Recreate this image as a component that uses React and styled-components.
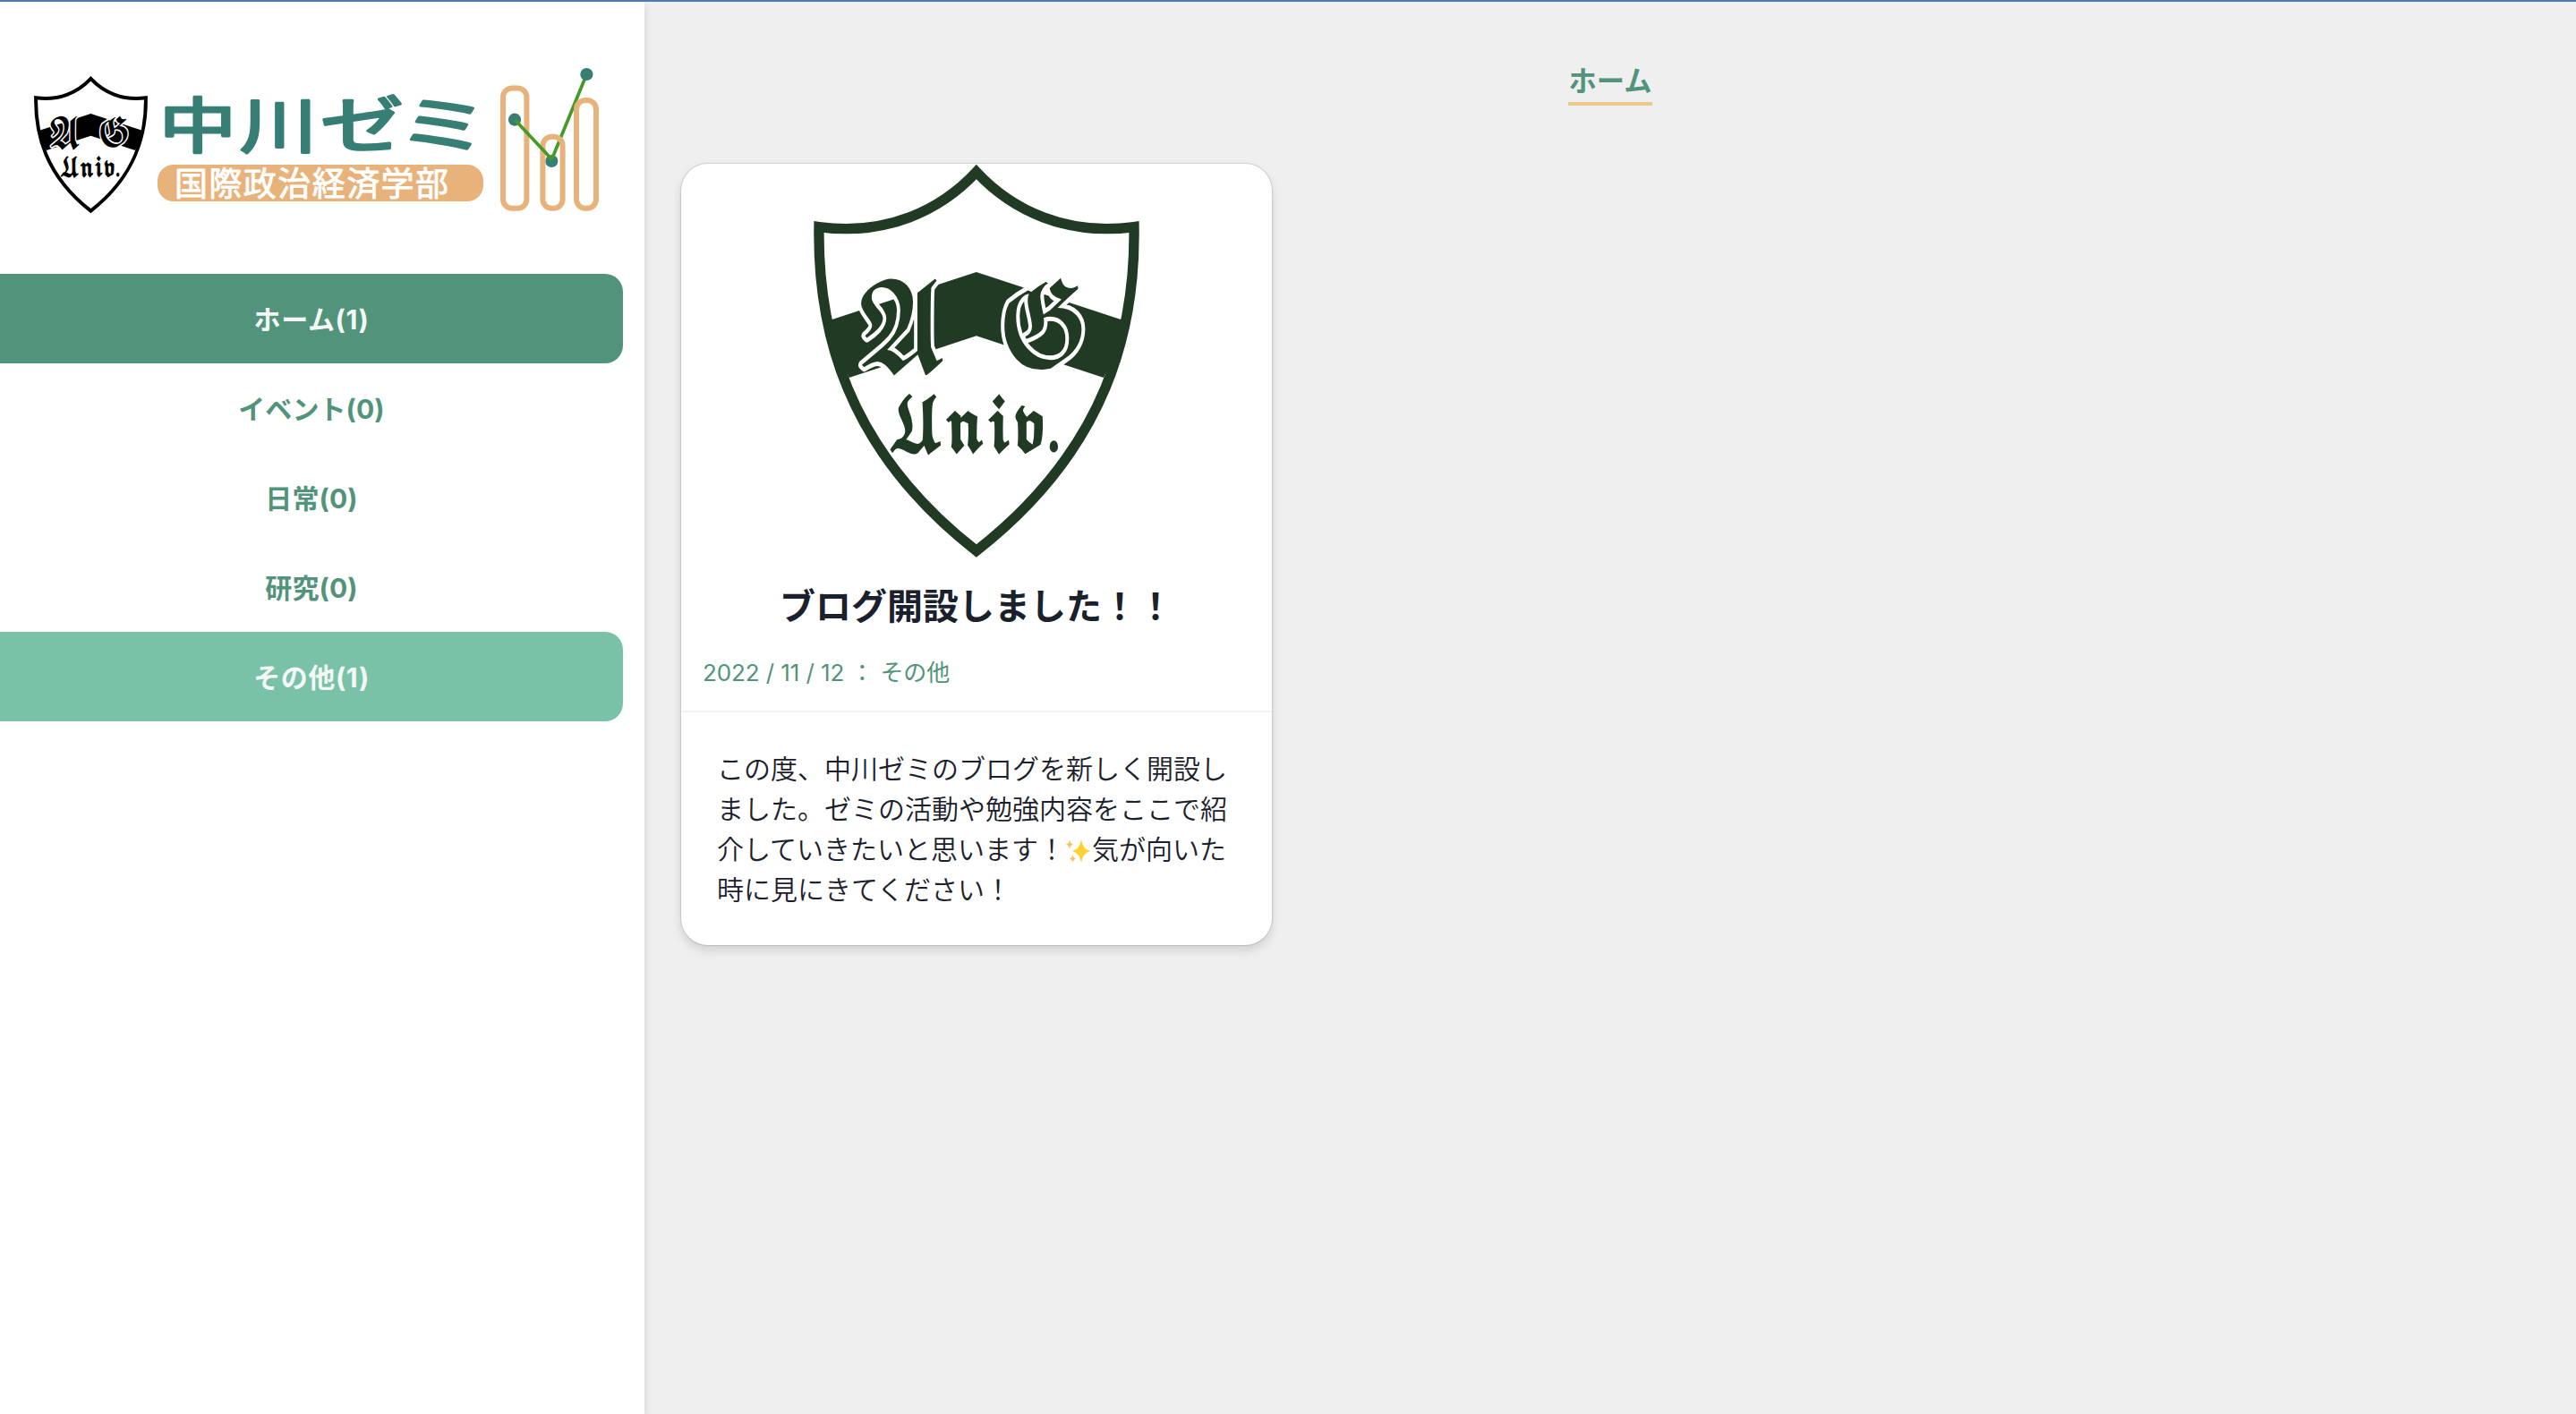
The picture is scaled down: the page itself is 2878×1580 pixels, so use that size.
import React from "react";
import styled, { createGlobalStyle } from "styled-components";

const GlobalStyle = createGlobalStyle`
  * { box-sizing: border-box; }
  body {
    margin: 0;
    background: #efefef;
    color: #1a202c;
    font-family: Inter, "Noto Sans CJK JP", sans-serif;
    font-size: 30px;
    line-height: 1.5;
  }
`;

const Page = styled.div`
  display: flex;
  height: 1580px;
  border-top: 2px solid #5279ae;
  overflow: hidden;
`;

const Sidebar = styled.aside`
  flex: 0 0 720px;
  background: #fff;
  box-shadow: 0 8px 12px rgba(0, 0, 0, 0.08), 0 0 10px rgba(0, 0, 0, 0.05);
`;

const LogoLink = styled.div`
  height: 304px;
  svg { display: block; }
`;

const Menu = styled.nav`
  display: flex;
  flex-direction: column;
  width: 696px;
`;

const MenuItem = styled.a`
  display: flex;
  align-items: center;
  justify-content: center;
  height: 100px;
  padding-top: 2px;
  border-radius: 0 20px 20px 0;
  font-weight: 700;
  letter-spacing: ${(p) => (p.$bg ? "0.6px" : "0.1px")};
  color: ${(p) => (p.$bg ? "#f3f7f5" : "#52937b")};
  background: ${(p) => p.$bg || "transparent"};
`;

const Main = styled.main`
  flex: 1;
  display: flex;
  flex-direction: column;
`;

const Tabs = styled.div`
  display: flex;
  justify-content: center;
  height: 181px;
  padding-top: 64px;
`;

const Tab = styled.a`
  height: 52px;
  border-bottom: 4px solid #ebc88c;
  color: #52937b;
  font-size: 31.4px;
  line-height: 50px;
  font-weight: 700;
`;

const Posts = styled.div`
  display: flex;
  padding-left: 41px;
`;

const Card = styled.article`
  width: 660px;
  border-radius: 30px;
  background: #fff;
  box-shadow: 0 0 1px 1px rgba(0, 0, 0, 0.12), 0 6px 12px rgba(0, 0, 0, 0.13);
  overflow: hidden;
`;

const CardImage = styled.div`
  display: flex;
  justify-content: center;
  height: 442px;
`;

const Title = styled.h2`
  margin: 0;
  padding-top: 23px;
  height: 100px;
  font-size: 40px;
  line-height: 60px;
  font-weight: 700;
  text-align: center;
`;

const Meta = styled.div`
  display: flex;
  height: 71px;
  padding: 7px 24px 0;
  color: #52937b;
  font-size: 26px;
  line-height: 39px;
  letter-spacing: -0.1px;
  white-space: pre;
  border-bottom: 2px solid #edf2f7;
`;

const Body = styled.p`
  margin: 0;
  padding: 41px 40px 39px;
  font-weight: 350;
`;

const Sparkle = styled.svg`
  display: inline-block;
  width: 30px;
  height: 30px;
  vertical-align: -5px;
`;

const blackletter = `"DejaVu Math TeX Gyre", "DejaVu Serif", "Liberation Serif", serif`;

function Crest({ color, ...rest }) {
  const letter = {
    fontFamily: blackletter,
    fill: color,
    stroke: "#fff",
    strokeWidth: 30,
    strokeLinejoin: "round",
    paintOrder: "stroke",
  };
  return (
    <svg viewBox="87 42 1091 1317" {...rest}>
      <path
        fill="#fff"
        stroke={color}
        strokeWidth="34"
        strokeMiterlimit="8"
        d="M632 67 C512 196 330 282 105 251 C100 590 190 990 632 1336 C1074 990 1165 590 1160 251 C934 282 752 196 632 67Z"
      />
      <path
        fill={color}
        d="M140 564 L632 402 L1125 564 Q1098 680 1058 756 L632 616 L206 756 Q164 674 140 564Z"
      />
      <text {...letter} x="222" y="736" fontSize="400" textLength="322" lengthAdjust="spacingAndGlyphs">𝕬</text>
      <text {...letter} x="702" y="716" fontSize="375" textLength="306" lengthAdjust="spacingAndGlyphs">𝕲</text>
      <text
        x="334"
        y="1000"
        fontSize="238"
        fill={color}
        stroke={color}
        strokeWidth="9"
        fontFamily={blackletter}
        textLength="584"
        lengthAdjust="spacingAndGlyphs"
      >
        𝖀𝖓𝖎𝖛.
      </text>
    </svg>
  );
}

function Logo() {
  const teal = "#377e75";
  const sand = "#e8b27b";
  return (
    <svg width="720" height="270" viewBox="0 2 720 270">
      <Crest color="#000" x="38" y="85" width="127" height="153.3" />
      <g
        fontFamily="'Noto Sans CJK JP', sans-serif"
        fontSize="86"
        fontWeight="400"
        fill={teal}
        stroke={teal}
        strokeWidth="3.8"
        strokeLinejoin="round"
      >
        <text transform="translate(178 164.500) scale(1 0.78)" x="0 90">中川</text>
        <text transform="translate(358 164.500) scale(1.08 0.8)">ゼ</text>
        <text transform="translate(444 164.500) scale(1.2 0.79)">ミ</text>
      </g>
      <rect x="176" y="184" width="364" height="41" rx="18" fill={sand} />
      <text
        x="195"
        y="218.500"
        fontFamily="'Noto Sans CJK JP', sans-serif"
        fontSize="37"
        fontWeight="400"
        fill="#fff"
        stroke="#fff"
        strokeWidth="0.9"
        strokeLinejoin="round"
        textLength="306"
      >
        国際政治経済学部
      </text>
      <rect x="562" y="98.4" width="26.4" height="134.3" rx="10" fill="none" stroke={sand} strokeWidth="6" />
      <circle cx="575" cy="133.7" r="7.1" fill={teal} />
      <circle cx="616.3" cy="180" r="7.1" fill={teal} />
      <path d="M616.5 178 L655 84" fill="none" stroke="#459a29" strokeWidth="3.7" />
      <g fill="none" stroke={sand} strokeWidth="6">
        <rect x="606.4" y="152.8" width="22.2" height="79.9" rx="10" />
        <rect x="644" y="112" width="22" height="120.7" rx="10" />
      </g>
      <path d="M575.6 134.3 L616.5 178" fill="none" stroke="#459a29" strokeWidth="3.7" />
      <circle cx="655.4" cy="83" r="7.1" fill={teal} />
    </svg>
  );
}

const MENU = [
  { label: "ホーム(1)", bg: "#52937b" },
  { label: "イベント(0)" },
  { label: "日常(0)" },
  { label: "研究(0)" },
  { label: "その他(1)", bg: "#79c2a8" },
];

export default function App() {
  return (
    <>
      <GlobalStyle />
      <Page lang="ja">
        <Sidebar>
          <LogoLink>
            <Logo />
          </LogoLink>
          <Menu>
            {MENU.map((m) => (
              <MenuItem key={m.label} $bg={m.bg}>{m.label}</MenuItem>
            ))}
          </Menu>
        </Sidebar>
        <Main>
          <Tabs>
            <Tab>ホーム</Tab>
          </Tabs>
          <Posts>
            <Card>
              <CardImage>
                <Crest color="#203a24" width="364" height="441" />
              </CardImage>
              <Title>ブログ開設しました！！</Title>
              <Meta>2022 / 11 / 12 ： その他</Meta>
              <Body>
                この度、中川ゼミのブログを新しく開設しました。ゼミの活動や勉強内容をここで紹介していきたいと思います！
                <Sparkle viewBox="0 0 30 30" aria-label="sparkles">
                  <path fill="#fdd131" d="M18 3 Q19.500 13.500 28 16 Q19.500 18.500 18 29 Q16.500 18.500 8 16 Q16.500 13.500 18 3Z" />
                  <g fill="#fbc15a">
                    <path d="M5 3 Q5.500 7.500 9 8.500 Q5.500 9.500 5 14 Q4.500 9.500 1 8.500 Q4.500 7.500 5 3Z" />
                    <path d="M8.500 20 Q9 23.500 12 24.500 Q9 25.500 8.500 29 Q8 25.500 5 24.500 Q8 23.500 8.500 20Z" />
                  </g>
                </Sparkle>
                気が向いた時に見にきてください！
              </Body>
            </Card>
          </Posts>
        </Main>
      </Page>
    </>
  );
}
